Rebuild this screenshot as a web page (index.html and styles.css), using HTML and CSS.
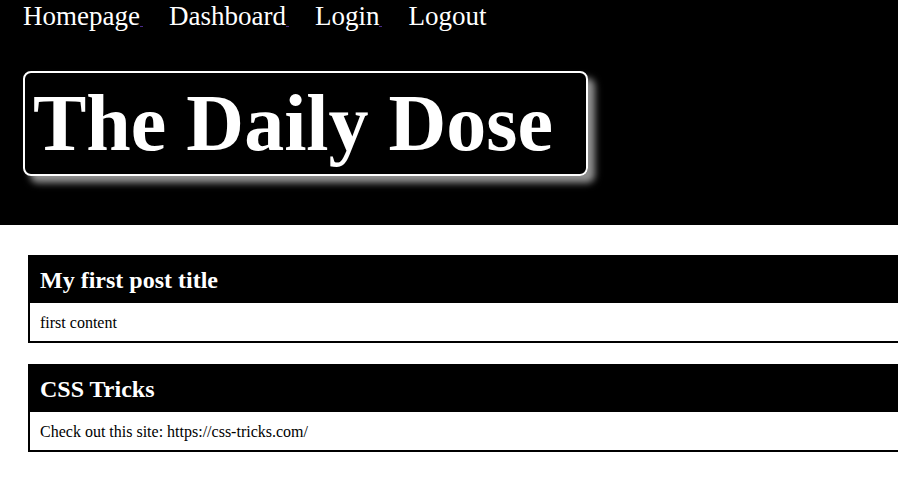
FILE: index.html
```html
<!DOCTYPE html>
<html>
<head>
<meta charset="utf-8">
<link rel="stylesheet" href="styles.css">
</head>
<body>
<header class="site-header">
  <nav class="nav">
    <a class="nav-link nav-link--trail" href="#">Homepage</a>
    <a class="nav-link nav-link--trail" href="#">Dashboard</a>
    <a class="nav-link nav-link--trail" href="#">Login</a>
    <a class="nav-link" href="#">Logout</a>
  </nav>
  <div class="brand">
    <h1 class="brand-title">The Daily Dose</h1>
  </div>
</header>
<main class="posts">
  <article class="post">
    <h2 class="post-title">My first post title</h2>
    <p class="post-body">first content</p>
  </article>
  <article class="post">
    <h2 class="post-title">CSS Tricks</h2>
    <p class="post-body">Check out this site: https://css-tricks.com/</p>
  </article>
</main>
</body>
</html>
```
FILE: styles.css
```css
html, body {
  margin: 0;
  padding: 0;
  background: #fff;
  font-family: "Liberation Serif", "Times New Roman", serif;
  overflow: hidden;
}
.site-header {
  background: #000;
  height: 225px;
  padding: 0 0 0 23px;
  box-sizing: border-box;
}
.nav {
  display: flex;
  gap: 26px;
  font-size: 27px;
  line-height: 32px;
}
.nav-link {
  color: #fff;
  text-decoration: none;
}
.nav-link--trail::after {
  content: "";
  display: inline-block;
  width: 3px;
  height: 1px;
  background: #4a2a8a;
  vertical-align: -2px;
}
.brand {
  margin-top: 39px;
  display: inline-block;
  width: 561px;
  height: 101px;
  border: 2px solid #fff;
  border-radius: 8px;
  box-shadow: 7px 7px 7px #909090;
}
.brand-title {
  margin: 0;
  padding-left: 8px;
  color: #fff;
  font-size: 80px;
  font-weight: bold;
  line-height: 100px;
}
.posts {
  padding: 30px 0 0 28px;
  display: flex;
  flex-direction: column;
  gap: 21px;
}
.post {
  width: 900px;
  border-left: 2px solid #000;
  border-bottom: 2px solid #000;
}
.post-title {
  margin: 0;
  background: #000;
  color: #fff;
  font-size: 24px;
  font-weight: bold;
  height: 48px;
  line-height: 50px;
  padding-left: 10px;
}
.post-body {
  margin: 0;
  font-size: 16px;
  height: 38px;
  line-height: 40px;
  padding-left: 10px;
}
```
